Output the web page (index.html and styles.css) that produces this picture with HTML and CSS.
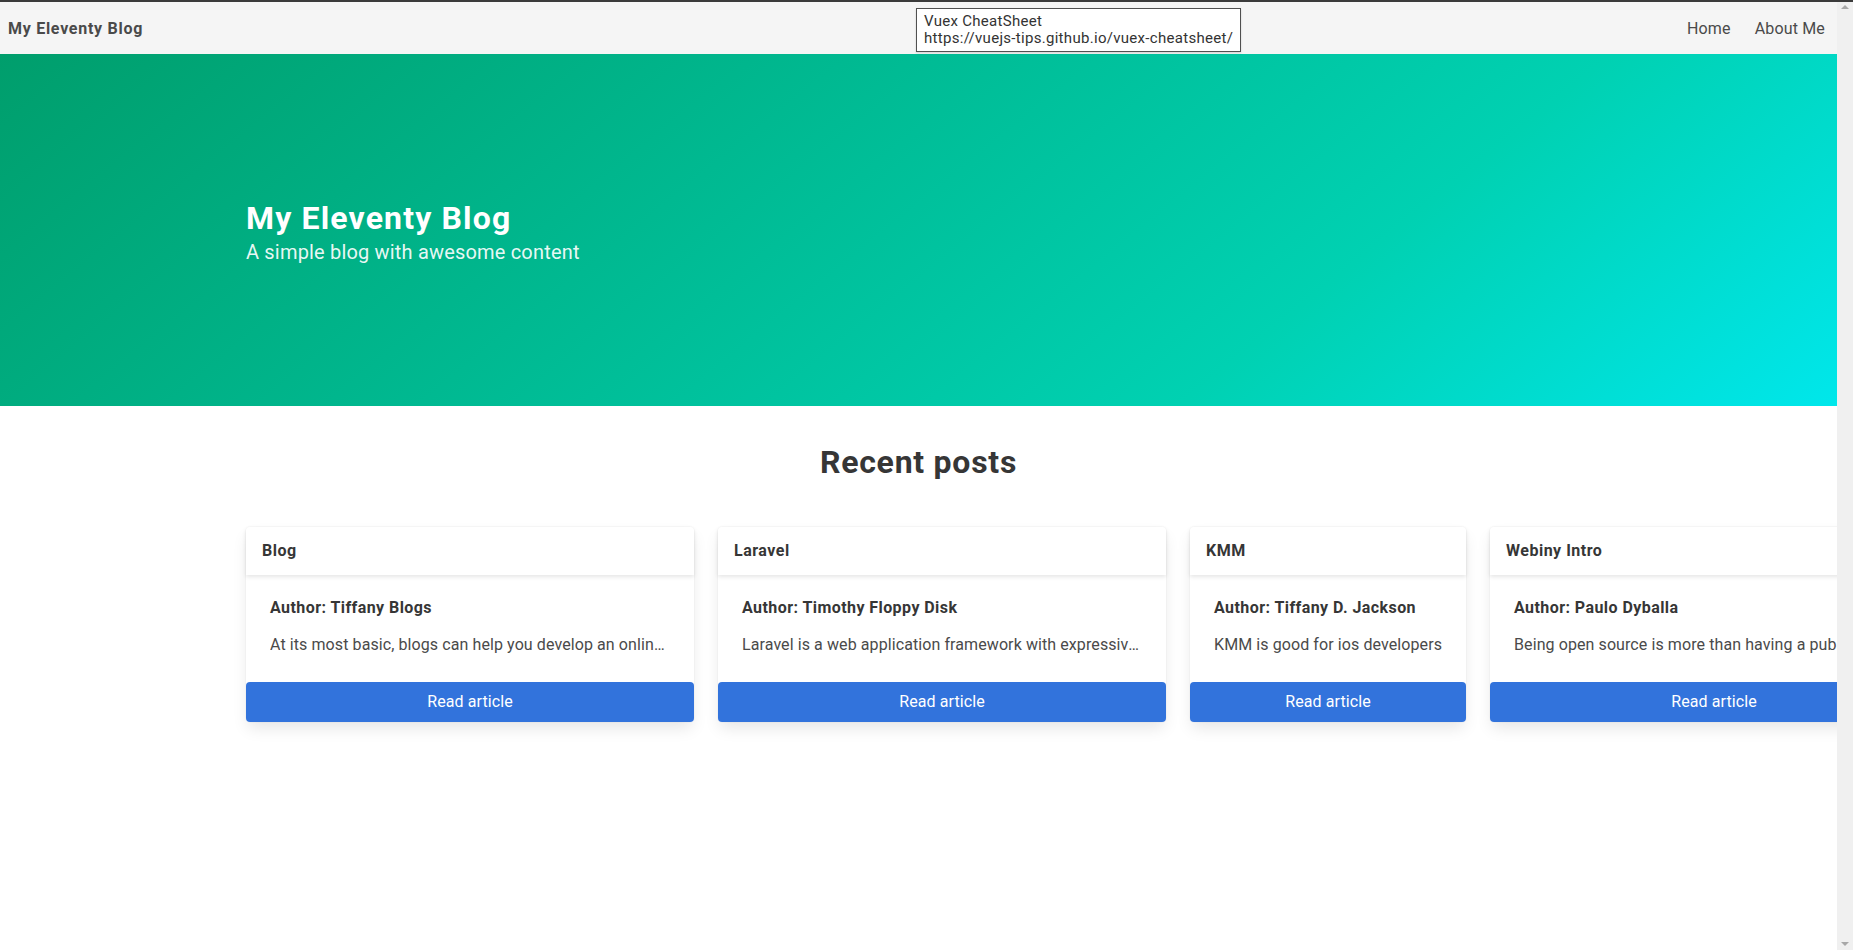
FILE: index.html
```html
<!DOCTYPE html>
<html lang="en">
<head>
<meta charset="utf-8">
<title>My Eleventy Blog</title>
<link rel="stylesheet" href="styles.css">
</head>
<body>
<div class="topline"></div>
<div class="frame">
  <div class="page">
    <nav class="navbar">
      <a class="brand" href="#">My Eleventy Blog</a>
      <div class="menu">
        <a class="nav-item" href="#">Home</a>
        <a class="nav-item" href="#">About Me</a>
      </div>
    </nav>
    <section class="hero">
      <div class="container">
        <h1 class="hero-title">My Eleventy Blog</h1>
        <p class="hero-subtitle">A simple blog with awesome content</p>
      </div>
    </section>
    <section class="posts">
      <div class="container">
        <h2 class="posts-title">Recent posts</h2>
        <div class="cards">
          <article class="card">
            <header class="card-header"><p class="card-title">Blog</p></header>
            <div class="card-content">
              <p class="author">Author: Tiffany Blogs</p>
              <p class="desc">At its most basic, blogs can help you develop an online presence and prove your expertise</p>
            </div>
            <a class="read" href="#">Read article</a>
          </article>
          <article class="card">
            <header class="card-header"><p class="card-title">Laravel</p></header>
            <div class="card-content">
              <p class="author">Author: Timothy Floppy Disk</p>
              <p class="desc">Laravel is a web application framework with expressive, elegant syntax</p>
            </div>
            <a class="read" href="#">Read article</a>
          </article>
          <article class="card">
            <header class="card-header"><p class="card-title">KMM</p></header>
            <div class="card-content">
              <p class="author">Author: Tiffany D. Jackson</p>
              <p class="desc">KMM is good for ios developers</p>
            </div>
            <a class="read" href="#">Read article</a>
          </article>
          <article class="card">
            <header class="card-header"><p class="card-title">Webiny Intro</p></header>
            <div class="card-content">
              <p class="author">Author: Paulo Dyballa</p>
              <p class="desc">Being open source is more than having a public repository on GitHub</p>
            </div>
            <a class="read" href="#">Read article</a>
          </article>
        </div>
      </div>
    </section>
  </div>
  <div class="scrollbar">
    <span class="arrow arrow-up"></span>
    <span class="arrow arrow-down"></span>
  </div>
</div>
<div class="tooltip">
  <div>Vuex CheatSheet</div>
  <div>https://vuejs-tips.github.io/vuex-cheatsheet/</div>
</div>
</body>
</html>
```

FILE: styles.css
```css
* { box-sizing: border-box; }
html, body {
  margin: 0;
  padding: 0;
  height: 950px;
  overflow: hidden;
  background: #ffffff;
}
body {
  font-family: Roboto, "Liberation Sans", sans-serif;
  font-size: 16px;
  color: #4a4a4a;
  position: relative;
}
h1, h2, p { margin: 0; }
a { text-decoration: none; }

.topline {
  height: 2px;
  background: #3b3b3b;
}
.frame {
  display: flex;
  height: 948px;
}
.page {
  flex: 1;
  min-width: 0;
  overflow: hidden;
}
.scrollbar {
  width: 16px;
  flex: none;
  background: #f0f0f0;
  display: flex;
  flex-direction: column;
  justify-content: space-between;
  align-items: center;
  padding: 3px 0 4px;
}
.arrow {
  width: 0;
  height: 0;
  border-left: 4px solid transparent;
  border-right: 4px solid transparent;
}
.arrow-up { border-bottom: 4px solid #a8a8a8; }
.arrow-down { border-top: 4px solid #a8a8a8; }

/* navbar */
.navbar {
  height: 52px;
  background: #f5f5f5;
  display: flex;
  align-items: center;
  justify-content: space-between;
}
.brand {
  padding-left: 8px;
  font-weight: 700;
  font-size: 16px;
  color: #4a4a4a;
  letter-spacing: 0.045em;
}
.menu {
  display: flex;
}
.nav-item {
  padding: 0 12px;
  color: #4a4a4a;
  font-size: 16px;
  letter-spacing: 0.01em;
}

/* hero */
.container {
  max-width: 1345px;
  margin: 0 auto;
}
.hero {
  background-image: linear-gradient(141deg, #009e6c 0%, #00d1b2 71%, #00e7eb 100%);
  padding: 146px 0 141px;
  color: #fff;
}
.hero-title {
  font-size: 32px;
  line-height: 36px;
  font-weight: 700;
  color: #fff;
  letter-spacing: 1.15px;
}
.hero-subtitle {
  margin-top: 4px;
  font-size: 20px;
  line-height: 25px;
  color: rgba(255, 255, 255, 0.92);
  letter-spacing: 0.18px;
}

/* posts */
.posts {
  padding-top: 38px;
}
.posts-title {
  text-align: center;
  font-size: 32px;
  line-height: 36px;
  font-weight: 700;
  color: #363636;
  margin-bottom: 47px;
  letter-spacing: 0.75px;
}
.cards {
  display: flex;
  gap: 24px;
  align-items: stretch;
}
.card {
  flex: none;
  display: flex;
  flex-direction: column;
  background: #fff;
  border-radius: 4px;
  box-shadow: 0 8px 16px -2px rgba(10, 10, 10, 0.1), 0 0 0 1px rgba(10, 10, 10, 0.02);
}
.card-header {
  box-shadow: 0 2px 4px rgba(10, 10, 10, 0.1);
  padding: 12px 16px;
  border-radius: 4px 4px 0 0;
}
.card-title {
  font-weight: 700;
  color: #363636;
  line-height: 24px;
  letter-spacing: 0.5px;
}
.card-content {
  padding: 21px 24px 25px;
  flex: 1;
}
.author {
  font-weight: 700;
  color: #363636;
  line-height: 24px;
  margin-bottom: 13px;
  letter-spacing: 0.43px;
}
.desc {
  line-height: 24px;
  max-width: 400px;
  white-space: nowrap;
  overflow: hidden;
  text-overflow: ellipsis;
  color: #4a4a4a;
  letter-spacing: 0.09px;
}
.read {
  display: block;
  height: 40px;
  line-height: 40px;
  background: #3273dc;
  color: #fff;
  text-align: center;
  border-radius: 4px;
  font-size: 16px;
  letter-spacing: 0.1px;
}

/* native tooltip overlay */
.tooltip {
  position: absolute;
  left: 916px;
  top: 8px;
  background: #fff;
  border: 1px solid #505050;
  padding: 4px 7px 4px 7px;
  font-size: 15px;
  line-height: 17px;
  color: #333;
  letter-spacing: 0.3px;
  box-shadow: 0 1px 2px rgba(0, 0, 0, 0.15);
}
```
